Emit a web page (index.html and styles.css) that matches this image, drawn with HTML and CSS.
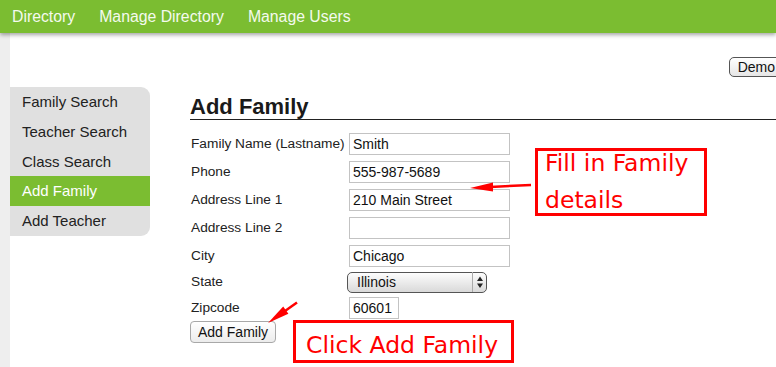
FILE: index.html
```html
<!doctype html>
<html>
	<head>
		<title>Directory - Add Family</title>
		<meta charset="utf-8"/>
		<link rel="stylesheet" href="styles.css">
	</head>
	<body>

		<header class="topbar">
			<nav>
				<a href="#">Directory</a>
				<a href="#">Manage Directory</a>
				<a href="#">Manage Users</a>
			</nav>
		</header>

		<div class="page">

			<div class="toolbar">
				<button class="demo" type="button">Demo</button>
			</div>

			<div class="layout">

				<ul class="sidenav">
					<li><a href="#">Family Search</a></li>
					<li><a href="#">Teacher Search</a></li>
					<li><a href="#">Class Search</a></li>
					<li class="active"><a href="#">Add Family</a></li>
					<li><a href="#">Add Teacher</a></li>
				</ul>

				<main class="content">
					<h2>Add Family</h2>

					<form>
					<table class="fields">
						<tr>
							<td class="label"><label for="lastname">Family Name (Lastname)</label></td>
							<td><input type="text" id="lastname" value="Smith"/></td>
						</tr>
						<tr>
							<td class="label"><label for="phone">Phone</label></td>
							<td><input type="text" id="phone" value="555-987-5689"/></td>
						</tr>
						<tr>
							<td class="label"><label for="address1">Address Line 1</label></td>
							<td><input type="text" id="address1" value="210 Main Street"/></td>
						</tr>
						<tr>
							<td class="label"><label for="address2">Address Line 2</label></td>
							<td><input type="text" id="address2" value=""/></td>
						</tr>
						<tr>
							<td class="label"><label for="city">City</label></td>
							<td><input type="text" id="city" value="Chicago"/></td>
						</tr>
						<tr class="row-select">
							<td class="label"><label for="state">State</label></td>
							<td>
								<span class="selectbox">
									<select id="state">
										<option>Illinois</option>
									</select>
									<svg class="updown" width="14" height="20" viewBox="0 0 14 20">
										<line x1="0.5" y1="0" x2="0.5" y2="20" stroke="#aaa"/>
										<path d="M5 9 L8 4.5 L11 9 Z M5 11.5 L8 16 L11 11.5 Z" fill="#222"/>
									</svg>
								</span>
							</td>
						</tr>
						<tr class="row-zip">
							<td class="label"><label for="zip">Zipcode</label></td>
							<td><input type="text" id="zip" class="zip" value="60601"/></td>
						</tr>
						<tr class="row-submit">
							<td colspan="2"><button type="submit" class="btn">Add Family</button></td>
						</tr>
					</table>
					</form>
				</main>

			</div>

		</div>

		<!-- screenshot annotations -->
		<svg class="arrows" width="776" height="367" viewBox="0 0 776 367">
			<line x1="531" y1="185" x2="490" y2="187" stroke="#f00" stroke-width="2.5"/>
			<polygon points="470,188 493,182.5 493,191.5" fill="#f00"/>
			<line x1="297" y1="302.5" x2="285" y2="311" stroke="#f00" stroke-width="2.5"/>
			<polygon points="268,323 288.4,313.7 283.2,306.5" fill="#f00"/>
		</svg>

		<div class="note note-fill"><p>Fill in Family<br>details</p></div>
		<div class="note note-click"><p>Click Add Family</p></div>

	</body>
</html>
```

FILE: styles.css
```css
html, body {
	overflow: hidden;
}

body {
	margin: 0;
	position: relative;
	height: 367px;
	background: #eeeeee;
	font-family: "Liberation Sans", Arial, sans-serif;
	color: #222;
}

/* top green bar */
.topbar {
	height: 33px;
	background: #7bbd31;
	box-shadow: 0 2px 4px rgba(0, 0, 0, .35);
	position: relative;
	z-index: 2;
}

.topbar nav {
	display: flex;
}

.topbar a {
	display: block;
	padding: 0 12px;
	line-height: 33px;
	font-size: 15.8px;
	color: #f4faee;
	text-decoration: none;
}

.page {
	margin-left: 10px;
	background: #fff;
	height: 334px;
}

.toolbar {
	display: flex;
	justify-content: flex-end;
	padding-top: 24px;
}

.demo {
	height: 20px;
	margin-right: -8px;
	padding: 0 8px;
	font: 14px "Liberation Sans", Arial, sans-serif;
	color: #111;
	border: 1px solid #555;
	border-radius: 5px;
	background: linear-gradient(#fff, #e6e6e6);
}

.layout {
	display: flex;
	margin-top: 10px;
}

/* left side menu */
.sidenav {
	list-style: none;
	margin: 0;
	padding: 0;
	width: 140px;
	flex: none;
	background: #e0e0e0;
	border-radius: 0 9px 9px 0;
	align-self: flex-start;
}

.sidenav a {
	display: block;
	padding: 6px 12px;
	line-height: 17.8px;
	font-size: 15px;
	color: #222;
	text-decoration: none;
}

.sidenav .active a {
	background: #7bbd31;
	color: #fff;
}

.content {
	flex: 1;
	margin-left: 40px;
}

.content h2 {
	margin: 8px 0 0;
	line-height: 24px;
	font-size: 22px;
	font-weight: bold;
	color: #1a1a1a;
	border-bottom: 1px solid #222;
}

.fields {
	margin-top: 10px;
	border-collapse: separate;
	border-spacing: 0;
}

.fields td {
	padding: 3px 0;
	vertical-align: middle;
}

.fields td.label {
	width: 158px;
	padding-left: 1px;
	font-size: 13.7px;
	line-height: 22px;
}

.fields input {
	box-sizing: border-box;
	display: block;
	width: 161px;
	height: 22px;
	margin: 0;
	padding: 1px 3px;
	font: 14px "Liberation Sans", Arial, sans-serif;
	color: #111;
	border: 1px solid #c3c3c3;
}

.fields input.zip {
	width: 50px;
}

.row-select td {
	padding: 1px 0 2px;
}

.row-zip td {
	padding: 2px 0;
}

.row-submit td {
	padding: 0;
}

.selectbox {
	position: relative;
	display: block;
	width: 140px;
	margin-left: -2px;
}

.selectbox select {
	appearance: none;
	display: block;
	box-sizing: border-box;
	width: 140px;
	height: 21px;
	margin: 0;
	padding: 0 0 0 9px;
	font: 14px "Liberation Sans", Arial, sans-serif;
	color: #111;
	border: 1px solid #555;
	border-radius: 5px;
	background: linear-gradient(#fdfdfd, #d9d9d9);
}

.selectbox .updown {
	position: absolute;
	right: 1px;
	top: 0.5px;
	pointer-events: none;
}

.btn {
	display: block;
	height: 22px;
	padding: 0 7px;
	font: 14px "Liberation Sans", Arial, sans-serif;
	color: #111;
	border: 1px solid #a8a8a8;
	border-radius: 4px;
	background: linear-gradient(#fff, #ececec);
}

/* red callouts over the screenshot */
.arrows {
	position: absolute;
	left: 0;
	top: 0;
	pointer-events: none;
}

.note {
	position: absolute;
	box-sizing: border-box;
	border: 3px solid #f00;
	background: #fff;
	color: #f00;
	font-family: "DejaVu Sans", Verdana, sans-serif;
	font-size: 23.5px;
}

.note p {
	margin: 0;
}

.note-fill {
	left: 535px;
	top: 148px;
	width: 172px;
	height: 68px;
	padding-left: 7px;
	line-height: 36.5px;
}

.note-fill p {
	margin-top: -6px;
}

.note-click {
	left: 293px;
	top: 320px;
	width: 221px;
	height: 43px;
	padding: 4px 0 0 10px;
	line-height: 37px;
}
```
